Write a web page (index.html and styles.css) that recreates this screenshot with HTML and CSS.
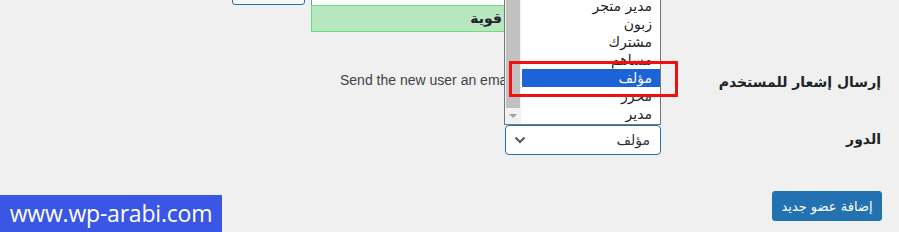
FILE: index.html
```html
<!DOCTYPE html>
<html lang="ar">
<head>
<meta charset="utf-8">
<link rel="stylesheet" href="styles.css">
</head>
<body>
<div class="page">
  <div class="form">
    <div class="field pw-field">
      <div class="pw-row">
        <button class="hide-btn" type="button"></button>
        <div class="pw-col">
          <div class="pw-input"></div>
          <div class="pw-meter">قوية</div>
        </div>
      </div>
    </div>
    <div class="label pw-label"></div>

    <div class="field notify-field">
      <span class="notify-text">Send the new user an email about their account.</span>
    </div>
    <div class="label notify-label">إرسال إشعار للمستخدم</div>

    <div class="field role-field">
      <div class="select">
        <svg class="chev" width="12" height="8" viewBox="0 0 12 8"><path d="M1.5 1.5 L6 6 L10.5 1.5" fill="none" stroke="#50575e" stroke-width="2"/></svg>
        <span class="select-value">مؤلف</span>
      </div>
    </div>
    <div class="label role-label">الدور</div>

    <div class="submit-row">
      <button class="primary" type="button">إضافة عضو جديد</button>
    </div>
  </div>

  <div class="listbox">
    <div class="scrollbar">
      <div class="thumb"></div>
      <div class="track"><span class="arrow"></span></div>
    </div>
    <ul class="options">
      <li>محرر الأسعار</li>
      <li>مدير متجر</li>
      <li>زبون</li>
      <li>مشترك</li>
      <li>مساهم</li>
      <li class="selected">مؤلف</li>
      <li>محرر</li>
      <li>مدير</li>
    </ul>
  </div>

  <div class="annotation"></div>

  <div class="watermark">www.wp-arabi.com</div>
</div>
</body>
</html>
```

FILE: styles.css
```css
html, body {
  margin: 0;
  padding: 0;
}
body {
  background: #f0f0f1;
  font-family: "DejaVu Sans", "Liberation Sans", sans-serif;
  color: #1d2327;
}
.page {
  position: relative;
  width: 899px;
  height: 232px;
  overflow: hidden;
}
.form {
  display: grid;
  grid-template-columns: 429px 220px;
  padding-left: 232px;
  margin-top: -25px;
}
.field, .label {
  min-width: 0;
}
.label {
  text-align: right;
  font-weight: bold;
  font-size: 14px;
  direction: rtl;
}

/* password row */
.pw-row {
  display: flex;
  gap: 6px;
  align-items: flex-start;
}
.hide-btn {
  width: 73px;
  height: 30px;
  background: #f6f7f7;
  border: 1px solid #2271b1;
  border-radius: 3px;
  padding: 0;
  box-sizing: border-box;
}
.pw-col {
  width: 350px;
}
.pw-input {
  height: 30px;
  background: #fff;
  border: 1px solid #8c8f94;
  border-bottom: none;
  box-sizing: border-box;
}
.pw-meter {
  height: 27px;
  box-sizing: border-box;
  background: #b8e6bf;
  border: 1px solid #68de7c;
  text-align: center;
  font-weight: bold;
  font-size: 14px;
  line-height: 24px;
  direction: rtl;
}

/* notification row */
.notify-field {
  padding-top: 38px;
  padding-left: 108px;
  height: 40px;
  white-space: nowrap;
}
.notify-text {
  font-family: "Liberation Sans", Arial, sans-serif;
  font-size: 14px;
  line-height: 20px;
  color: #3c434a;
}
.notify-label {
  padding-top: 40px;
  line-height: 20px;
}

/* role row */
.role-field {
  padding-top: 15px;
  display: flex;
  justify-content: flex-end;
}
.select {
  width: 156px;
  height: 30px;
  box-sizing: border-box;
  background: #fff;
  border: 1px solid #2271b1;
  border-radius: 4px;
  display: flex;
  align-items: center;
  justify-content: space-between;
  padding: 0 10px 0 8px;
}
.select-value {
  font-size: 14px;
  direction: rtl;
  color: #2c3338;
}
.role-label {
  padding-top: 19px;
  line-height: 20px;
}

/* submit */
.submit-row {
  grid-column: 1 / 3;
  display: flex;
  justify-content: flex-end;
  padding-top: 36px;
  margin-right: -1px;
}
.primary {
  height: 30px;
  width: 110px;
  background: #2271b1;
  border: 1px solid #2271b1;
  border-radius: 3px;
  color: #fff;
  font-family: "DejaVu Sans", sans-serif;
  font-size: 13px;
  direction: rtl;
  padding: 0;
}

/* open dropdown (overlay) */
.listbox {
  position: absolute;
  left: 504px;
  top: -21px;
  width: 157px;
  height: 146px;
  box-sizing: border-box;
  background: #fff;
  border: 1px solid #767676;
  border-top: none;
  display: flex;
}
.scrollbar {
  width: 16px;
  display: flex;
  flex-direction: column;
  background: #f1f1f1;
}
.thumb {
  height: 129px;
  background: #c1c1c1;
  margin: 0 1px 0 1px;
}
.track {
  flex: 1;
  display: flex;
  justify-content: center;
  align-items: center;
}
.arrow {
  width: 0;
  height: 0;
  border-left: 4px solid transparent;
  border-right: 4px solid transparent;
  border-top: 4px solid #a3a3a3;
}
.options {
  list-style: none;
  margin: 0;
  padding: 0 0 0 1px;
  flex: 1;
  direction: rtl;
  font-size: 14px;
  color: #1d2327;
}
.options li {
  height: 18px;
  line-height: 18px;
  padding-right: 8px;
}
.options li.selected {
  background: #1b63d6;
  color: #fff;
}

/* red annotation box */
.annotation {
  position: absolute;
  left: 509px;
  top: 61px;
  width: 169px;
  height: 36px;
  box-sizing: border-box;
  border: 3px solid #ee1111;
}

/* watermark */
.watermark {
  position: absolute;
  left: 0;
  top: 195px;
  width: 222px;
  height: 37px;
  background: #3a56e4;
  color: #fff;
  font-family: "Open Sans", sans-serif;
  font-size: 23px;
  line-height: 37px;
  text-align: center;
  letter-spacing: -0.2px;
}
```
